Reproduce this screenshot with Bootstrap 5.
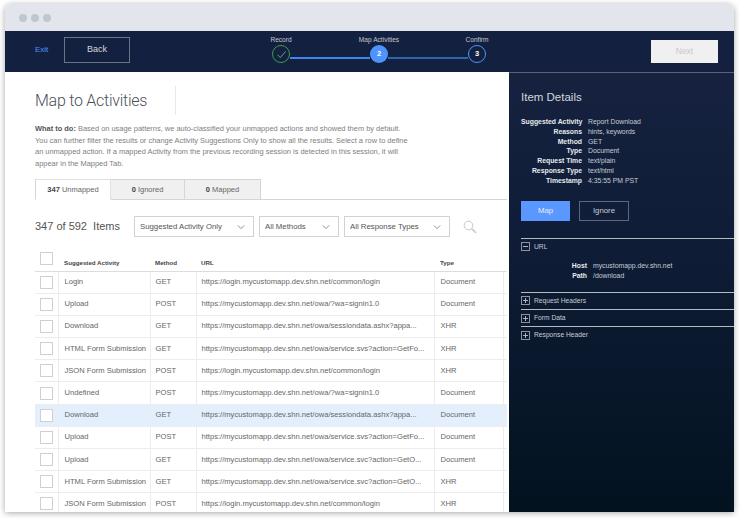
<!DOCTYPE html>
<html lang="en"><head><meta charset="utf-8"><title>Map to Activities</title>
<link href="https://cdn.jsdelivr.net/npm/bootstrap@5.3.0/dist/css/bootstrap.min.css" rel="stylesheet">
<style>
html,body{height:518px;overflow:hidden;background:#fff}
body{font-family:"Liberation Sans",Arial,sans-serif;font-size:7.6px;color:#666;padding:4px 6px 6px 5px}
.appwin{height:508px;border-radius:6px 6px 0 0;box-shadow:0 1px 6px rgba(0,0,0,.35);overflow:hidden;background:#fff}
.chrome{height:27px;background:#e2e6ec;padding-left:14px;gap:4px}
.chrome i{width:8px;height:8px;border-radius:50%;background:#bfc6cf;display:block}
.topbar{height:41px;background:#14203f;padding-right:16px}
.exit{color:#4d94ff;font-size:8px;margin-left:30px;width:29px;text-decoration:none;margin-bottom:3px}
.backb{width:66px;height:26px;border:1px solid #6c7488;border-radius:0;color:#d6d9df;font-size:9px;padding:0;background:none;margin-bottom:3px}
.steps{margin-left:142px;margin-top:4px}
.stp{width:18px}
.stp span{white-space:nowrap;font-size:6.6px;color:#c3c8d2;line-height:10px}
.disc{width:18px;height:18px;border-radius:50%;font-size:7.5px;font-weight:700;color:#fff;flex:none}
.disc.ok{border:1px solid #3f9a4f}
.disc.cur{background:#4d94ff}
.disc.nxt{border:1px solid #4d94ff}
.lnk{width:80px;height:2px;margin-top:22px;flex:none}
.lnk.a{background:#3d86f0}.lnk.b{background:#2f64ad}
.nextb{width:67px;height:23px;background:#f0f0f0;border:0;border-radius:0;color:#c9c9c9;font-size:8.5px;padding:0}
.mainpart{height:440px}
.leftp{width:504px;padding:0 0 0 30px;flex:none;overflow:hidden}
.ttl{font-family:Roboto,"Liberation Sans",sans-serif;font-size:16px;letter-spacing:-.25px;color:#4a4f57;font-weight:300;height:29px;width:141px;line-height:29px;margin:14px 0 8px;border-right:1px solid #e8e8e8}
.howto{font-size:7.45px;line-height:11.5px;color:#808080;margin:0 0 10px}
.howto b{color:#555}
.nav-tabs.tabz{width:472px;border-bottom:1px solid #d5d5d5;height:21px;flex-wrap:nowrap}
.tabz .nav-link{font-size:7.5px;height:21px;line-height:20px;padding:0;margin:0;text-align:center;color:#666;border:1px solid #d5d5d5;border-left:0;border-radius:0;background:#f0f0f0}
.tabz .nav-item:first-child .nav-link{border-left:1px solid #d5d5d5;width:76px}
.tabz .nav-link.active{background:#fff;border-bottom-color:#fff;color:#666}
.tabz .nav-item:nth-child(2) .nav-link{width:74px}
.tabz .nav-item:nth-child(3) .nav-link{width:76px}
.tabz b{color:#444}
.filt{margin-top:16px;height:21px}
.cnt{font-size:11px;color:#555;width:99px;white-space:pre}
.form-select.pick{height:21px;font-size:7.8px;color:#555;padding:0 16px 0 5px;border:1px solid #d2d2d2;border-radius:0;background-image:url("data:image/svg+xml,%3csvg xmlns='http://www.w3.org/2000/svg' viewBox='0 0 10 10'%3e%3cpath fill='none' stroke='%23777' stroke-width='1' d='M1 3l4 4 4-4'/%3e%3c/svg%3e");background-size:8px 8px;background-position:right 8px center;margin-right:5px;flex:none}
.tblwrap{margin-top:14px;width:472px}
.table.grid{margin:0;table-layout:fixed;width:472px;font-size:7.6px;color:#666;--bs-table-bg:transparent}
.grid th{font-size:6.2px;color:#444;font-weight:700;height:20px;padding:0 0 4px 6px;vertical-align:bottom;border-bottom:1px solid #dcdcdc;line-height:9px}
.grid th:first-child{padding:1px 0 0 5px;vertical-align:top}
.grid th:nth-child(n+3){padding-left:5px}
.grid th:nth-child(5){padding-left:6px}
.grid td{height:22.2px;padding:0 0 0 5px;vertical-align:middle;border-bottom:1px solid #ececec;border-left:1px solid #ececec;white-space:nowrap;overflow:hidden;color:#666;line-height:10px}
.grid td:first-child{border-left:0;padding:0 0 0 5px}
.grid td:nth-child(2){padding-left:6px}
.grid td:nth-child(5){padding-left:6px}
.grid tr.hl td{background:#e3effc}
.tick{width:13px;height:13px;border:1px solid #d0d0d0;background:#fff;display:block}
.sidep{width:225px;flex:none;background:linear-gradient(180deg,#16223f 0,#0f1d38 35%,#03121f 100%);border-top:1px solid #5a6272;padding:0 0 0 12px;color:#d9dce2}
.sidettl{font-size:11.5px;margin:17px 0 13px;line-height:14px;color:#d3d7de}
.kv{display:grid;grid-template-columns:61px auto;column-gap:6px;font-size:6.85px;line-height:9.8px;margin:0;justify-content:start}
.kv dt{font-weight:700;text-align:right;white-space:nowrap;color:#e8eaee}
.kv dd{margin:0;white-space:nowrap;color:#c8ccd4}
.acts{margin-top:15px;gap:9px}
.mapb{width:49px;height:20px;background:#5a98ff;border:0;border-radius:0;color:#e6efff;font-size:7.8px;padding:0}
.ignb{width:50px;height:20px;background:none;border:1px solid #5f6778;border-radius:0;color:#c8ccd4;font-size:7.8px;padding:0}
.sect{border-top:1.5px solid #b5b9c0;font-size:6.7px;color:#c8ccd4;height:17.3px;gap:4px}
.sect.first{margin-top:17px;height:auto;padding-top:3px;display:block}
.exbox{width:9px;height:9px;border:1px solid #8c919b;display:inline-block;position:relative;flex:none}
.exbox::before{content:"";position:absolute;left:1px;right:1px;top:3px;height:1px;background:#aeb2ba}
.exbox.pl::after{content:"";position:absolute;top:1px;bottom:1px;left:3px;width:1px;background:#aeb2ba}
.urlkv{grid-template-columns:27px auto;column-gap:6px;margin:9px 0 11px 39px;line-height:10px}
</style></head><body>
<div class="appwin d-flex flex-column">
 <div class="chrome d-flex align-items-center"><i></i><i></i><i></i></div>
 <div class="topbar d-flex align-items-center">
  <a class="exit" href="#">Exit</a>
  <button class="btn backb" type="button">Back</button>
  <div class="steps d-flex align-items-start align-self-start">
   <div class="stp d-flex flex-column align-items-center"><span>Record</span>
    <div class="disc ok d-flex align-items-center justify-content-center"><svg width="11" height="11" viewBox="0 0 11 11" fill="none" stroke="#4fae5f" stroke-width="1"><path d="M1.5 5.8 4.3 8.6 9.6 2.4"/></svg></div></div>
   <div class="lnk a"></div>
   <div class="stp d-flex flex-column align-items-center"><span>Map Activities</span>
    <div class="disc cur d-flex align-items-center justify-content-center">2</div></div>
   <div class="lnk b"></div>
   <div class="stp d-flex flex-column align-items-center"><span>Confirm</span>
    <div class="disc nxt d-flex align-items-center justify-content-center">3</div></div>
  </div>
  <button class="btn nextb ms-auto" type="button">Next</button>
 </div>
 <div class="mainpart d-flex">
  <div class="leftp">
   <h1 class="ttl">Map to Activities</h1>
   <p class="howto"><b>What to do:</b> Based on usage patterns, we auto-classified your unmapped actions and showed them by default.<br>You can further filter the results or change Activity Suggestions Only to show all the results. Select a row to define<br>an unmapped action. If a mapped Activity from the previous recording session is detected in this session, it will<br>appear in the Mapped Tab.</p>
   <ul class="nav nav-tabs tabz">
    <li class="nav-item"><a class="nav-link active" href="#"><b>347</b> Unmapped</a></li>
    <li class="nav-item"><a class="nav-link" href="#"><b>0</b> Ignored</a></li>
    <li class="nav-item"><a class="nav-link" href="#"><b>0</b> Mapped</a></li>
   </ul>
   <div class="filt d-flex align-items-center">
    <div class="cnt">347 of 592  Items</div>
    <select class="form-select pick" style="width:120px"><option>Suggested Activity Only</option></select>
    <select class="form-select pick" style="width:80px"><option>All Methods</option></select>
    <select class="form-select pick" style="width:106px"><option>All Response Types</option></select>
    <svg class="ms-2" width="14" height="14" viewBox="0 0 14 14" fill="none" stroke="#c4c8cc" stroke-width="1"><circle cx="5.5" cy="5.5" r="4.3"/><path d="M8.8 8.8 13 13" stroke-width="1.6"/></svg>
   </div>
   <div class="tblwrap">
    <table class="table grid">
     <colgroup><col style="width:23px"><col style="width:92px"><col style="width:46px"><col style="width:238px"><col style="width:69px"><col style="width:4px"></colgroup>
     <thead><tr><th><span class="tick"></span></th><th>Suggested Activity</th><th>Method</th><th>URL</th><th>Type</th><th></th></tr></thead>
     <tbody>
      <tr><td><span class="tick"></span></td><td>Login</td><td>GET</td><td>https://login.mycustomapp.dev.shn.net/common/login</td><td>Document</td><td></td></tr>
      <tr><td><span class="tick"></span></td><td>Upload</td><td>POST</td><td>https://mycustomapp.dev.shn.net/owa/?wa=signin1.0</td><td>Document</td><td></td></tr>
      <tr><td><span class="tick"></span></td><td>Download</td><td>GET</td><td>https://mycustomapp.dev.shn.net/owa/sessiondata.ashx?appa...</td><td>XHR</td><td></td></tr>
      <tr><td><span class="tick"></span></td><td>HTML Form Submission</td><td>GET</td><td>https://mycustomapp.dev.shn.net/owa/service.svs?action=GetFo...</td><td>XHR</td><td></td></tr>
      <tr><td><span class="tick"></span></td><td>JSON Form Submission</td><td>POST</td><td>https://login.mycustomapp.dev.shn.net/common/login</td><td>XHR</td><td></td></tr>
      <tr><td><span class="tick"></span></td><td>Undefined</td><td>POST</td><td>https://mycustomapp.dev.shn.net/owa/?wa=signin1.0</td><td>Document</td><td></td></tr>
      <tr class="hl"><td><span class="tick"></span></td><td>Download</td><td>GET</td><td>https://mycustomapp.dev.shn.net/owa/sessiondata.ashx?appa...</td><td>Document</td><td></td></tr>
      <tr><td><span class="tick"></span></td><td>Upload</td><td>POST</td><td>https://mycustomapp.dev.shn.net/owa/service.svs?action=GetFo...</td><td>Document</td><td></td></tr>
      <tr><td><span class="tick"></span></td><td>Upload</td><td>GET</td><td>https://mycustomapp.dev.shn.net/owa/service.svc?action=GetO...</td><td>Document</td><td></td></tr>
      <tr><td><span class="tick"></span></td><td>HTML Form Submission</td><td>GET</td><td>https://mycustomapp.dev.shn.net/owa/service.svc?action=GetO...</td><td>XHR</td><td></td></tr>
      <tr><td><span class="tick"></span></td><td>JSON Form Submission</td><td>POST</td><td>https://login.mycustomapp.dev.shn.net/common/login</td><td>XHR</td><td></td></tr>
     </tbody>
    </table>
   </div>
  </div>
  <div class="sidep">
   <div class="sidettl">Item Details</div>
   <dl class="kv">
    <dt>Suggested Activity</dt><dd>Report Download</dd>
    <dt>Reasons</dt><dd>hints, keywords</dd>
    <dt>Method</dt><dd>GET</dd>
    <dt>Type</dt><dd>Document</dd>
    <dt>Request Time</dt><dd>text/plain</dd>
    <dt>Response Type</dt><dd>text/html</dd>
    <dt>Timestamp</dt><dd>4:35:55 PM PST</dd>
   </dl>
   <div class="acts d-flex"><button class="btn mapb" type="button">Map</button><button class="btn ignb" type="button">Ignore</button></div>
   <div class="sect first">
    <div class="d-flex align-items-center gap-1"><span class="exbox"></span><span>URL</span></div>
    <dl class="kv urlkv"><dt>Host</dt><dd>mycustomapp.dev.shn.net</dd><dt>Path</dt><dd>/download</dd></dl>
   </div>
   <div class="sect d-flex align-items-center"><span class="exbox pl"></span><span>Request Headers</span></div>
   <div class="sect d-flex align-items-center"><span class="exbox pl"></span><span>Form Data</span></div>
   <div class="sect d-flex align-items-center"><span class="exbox pl"></span><span>Response Header</span></div>
  </div>
 </div>
</div>
<script src="https://cdn.jsdelivr.net/npm/bootstrap@5.3.0/dist/js/bootstrap.bundle.min.js"></script>
</body></html>
